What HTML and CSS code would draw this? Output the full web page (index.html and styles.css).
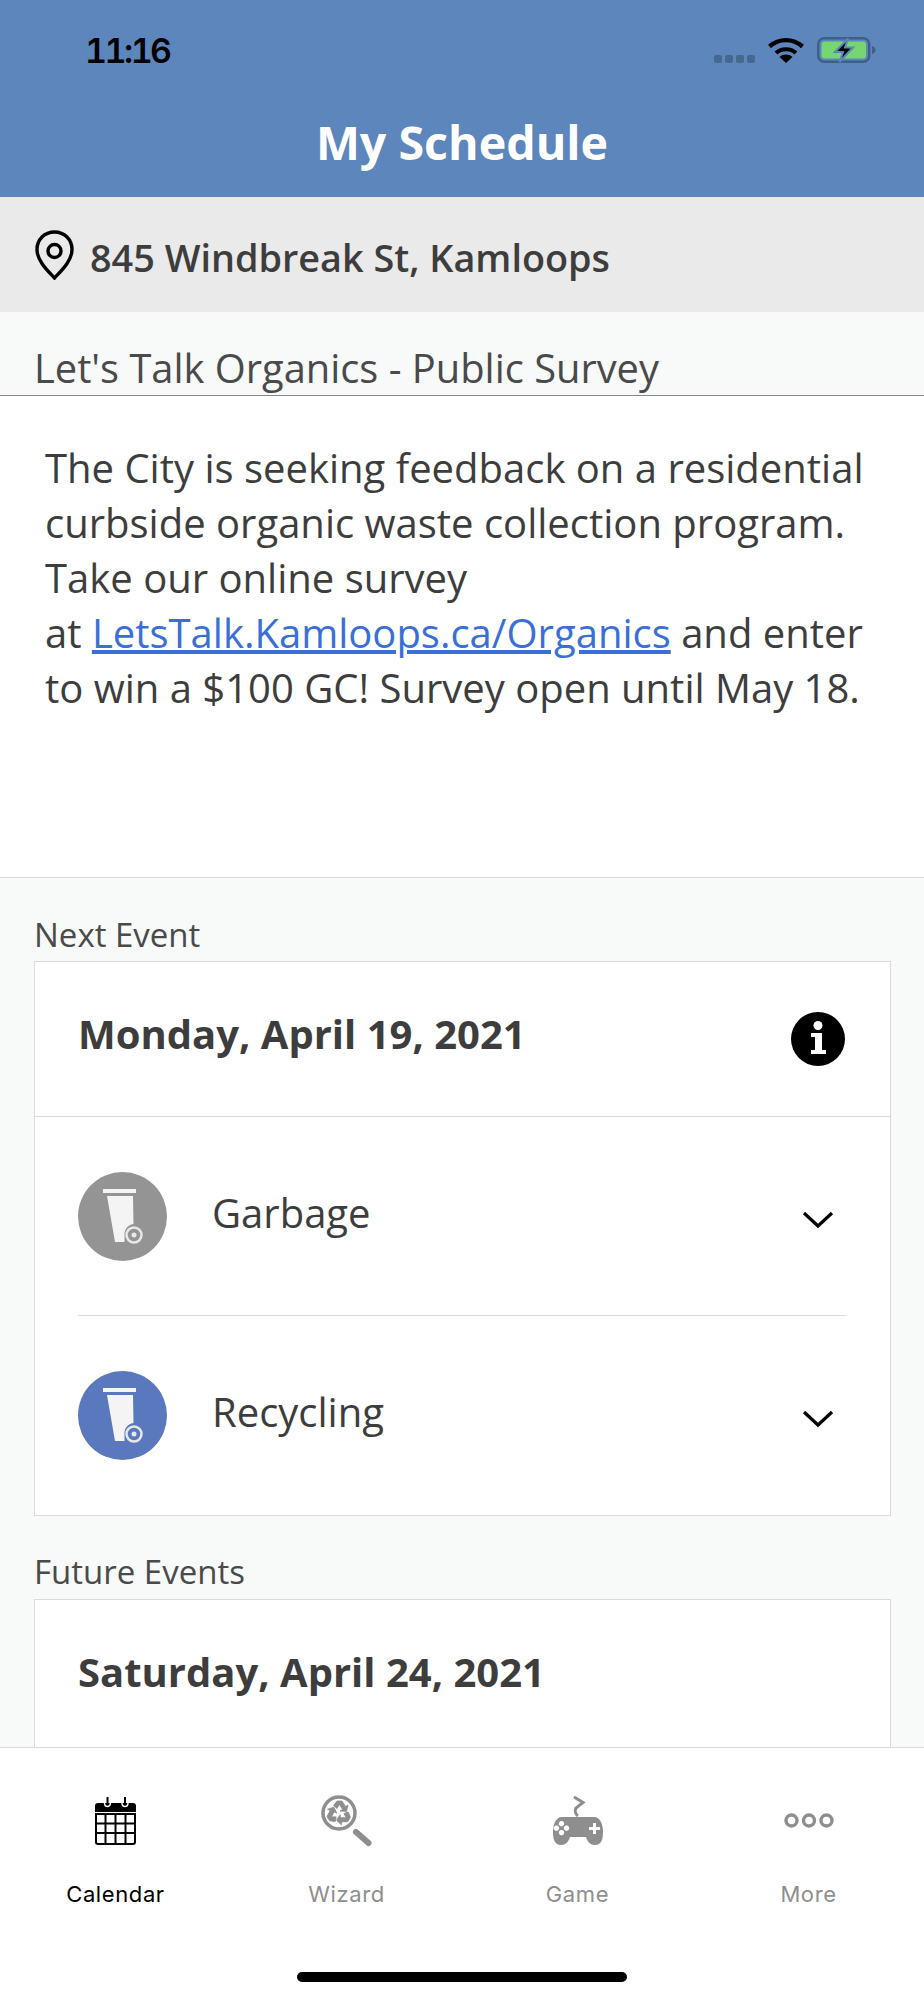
FILE: index.html
```html
<!DOCTYPE html>
<html lang="en">
<head>
  <meta charset="UTF-8" />
  <meta name="viewport" content="width=device-width, initial-scale=1.0"/>
  <title>My Schedule</title>
  <link rel="stylesheet" href="styles.css">
</head>
<body>
  <div class="app">
    <header class="top-bar">
      <div class="status-bar">
        <span class="clock">11:16</span>
        <div class="status-icons">
          <div class="signal"><i></i><i></i><i></i><i></i></div>
          <svg class="wifi" width="36" height="26" viewBox="0 0 36 26">
            <path d="M1.5 9.5C11 1 25 1 34.5 9.5" fill="none" stroke="#000" stroke-width="4.4"/>
            <path d="M8 16C13.500 11 22.500 11 28 16" fill="none" stroke="#000" stroke-width="4.2"/>
            <path d="M11.500 20L18 26L24.500 20C20.500 16.800 15.500 16.800 11.500 20Z" fill="#000"/>
          </svg>
          <svg class="battery" width="59" height="26" viewBox="0 0 59 26">
            <rect x="1.200" y="1.200" width="51" height="23.600" rx="6" fill="none" stroke="#3f5f86" stroke-width="2.400"/>
            <rect x="4.500" y="4.500" width="44.500" height="17" rx="3" fill="#76d672"/>
            <path d="M55 9c2.500 1 3.500 2.500 3.500 4s-1 3-3.500 4Z" fill="#3f5f86"/>
            <path d="M31 1.500L18 15H26L22.500 25L36 10.500H28Z" fill="#000" stroke="#5d86bc" stroke-width="2"/>
          </svg>
        </div>
      </div>
      <h1>My Schedule</h1>
    </header>

    <div class="address-bar">
      <svg class="pin" width="39" height="50" viewBox="0 0 39 50">
        <path d="M19.500 2C9.500 2 2 9.500 2 19.500C2 31 13 41 19.500 48C26 41 37 31 37 19.500C37 9.500 29.500 2 19.500 2Z" fill="none" stroke="#000" stroke-width="3.400"/>
        <circle cx="19.500" cy="21" r="6.500" fill="none" stroke="#000" stroke-width="3.400"/>
      </svg>
      <span>845 Windbreak St, Kamloops</span>
    </div>

    <main class="content">
      <section class="notice">
        <h2>Let's Talk Organics - Public Survey</h2>
        <p>
          The City is seeking feedback on a residential curbside organic waste collection program. Take our online survey<br>
          at <a href="#">LetsTalk.Kamloops.ca/Organics</a> and enter to win a $100 GC! Survey open until May 18.
        </p>
      </section>

      <section class="events">
        <h3>Next Event</h3>
        <div class="card">
          <div class="card-head">
            <span class="card-date">Monday, April 19, 2021</span>
            <svg width="54" height="54" viewBox="0 0 54 54">
              <circle cx="27" cy="27" r="27" fill="#000"/>
              <circle cx="27" cy="13.500" r="4.500" fill="#fff"/>
              <path d="M20 21H31V38H35V42H20V38H24V25H20Z" fill="#fff"/>
            </svg>
          </div>
          <div class="pickup">
            <svg class="bin" width="89" height="89" viewBox="0 0 89 89">
              <circle cx="44.500" cy="44.500" r="44.500" fill="#949494"/>
              <rect x="25" y="17" width="33" height="4" fill="#f4f4f4"/>
              <path d="M29 24H55L55.500 52C49 53 46 58 46.500 64V70H37Z" fill="#f4f4f4"/>
              <circle cx="56" cy="63" r="7.500" fill="none" stroke="#e8e8e8" stroke-width="2.500"/>
              <circle cx="56" cy="63" r="2.500" fill="#e8e8e8"/>
            </svg>
            <span class="pickup-name">Garbage</span>
            <svg class="chevron" width="32" height="18" viewBox="0 0 32 18">
              <path d="M2 2L16 15L30 2" fill="none" stroke="#000" stroke-width="3.200"/>
            </svg>
          </div>
          <div class="pickup">
            <svg class="bin" width="89" height="89" viewBox="0 0 89 89">
              <circle cx="44.500" cy="44.500" r="44.500" fill="#5a78bd"/>
              <rect x="25" y="17" width="33" height="4" fill="#f4f4f4"/>
              <path d="M29 24H55L55.500 52C49 53 46 58 46.500 64V70H37Z" fill="#f4f4f4"/>
              <circle cx="56" cy="63" r="7.500" fill="none" stroke="#e8e8e8" stroke-width="2.500"/>
              <circle cx="56" cy="63" r="2.500" fill="#e8e8e8"/>
            </svg>
            <span class="pickup-name">Recycling</span>
            <svg class="chevron" width="32" height="18" viewBox="0 0 32 18">
              <path d="M2 2L16 15L30 2" fill="none" stroke="#000" stroke-width="3.200"/>
            </svg>
          </div>
        </div>

        <h3 class="future">Future Events</h3>
        <div class="card">
          <div class="card-head">
            <span class="card-date">Saturday, April 24, 2021</span>
          </div>
        </div>
      </section>
    </main>

    <nav class="tabs">
      <div class="tab active">
        <svg width="42" height="48" viewBox="0 0 42 48">
          <path d="M3 6H38A3 3 0 0 1 41 9V15H0V9A3 3 0 0 1 3 6Z" fill="#000"/>
          <path d="M12.500 0V9M30 0V9" stroke="#000" stroke-width="2"/>
          <path d="M9.500 6A3 3.500 0 0 0 15.500 6M27 6A3 3.500 0 0 0 33 6" fill="none" stroke="#fff" stroke-width="1.400"/>
          <path d="M1 16V45A2 2 0 0 0 3 47H38A2 2 0 0 0 40 45V16M1 17H40M1 26.500H40M1 36H40M10.500 16V47M20.500 16V47M30.500 16V47" fill="none" stroke="#000" stroke-width="2"/>
        </svg>
        <span>Calendar</span>
      </div>
      <div class="tab">
        <svg width="52" height="52" viewBox="0 0 52 52">
          <circle cx="18" cy="18" r="16" fill="none" stroke="#8e8e8e" stroke-width="3.500"/>
          <path d="M35 37L47.500 48" stroke="#8e8e8e" stroke-width="6" stroke-linecap="round"/>
          <g fill="#8e8e8e" stroke="#8e8e8e" stroke-width="0.800">
            <path id="chase" d="M12.500 10.500L16 6H21L24.500 11.500L27 10L25.500 16.500L19 16L21.500 14.500L18.500 9.500L16 13.500Z"/>
            <use href="#chase" transform="rotate(120 18 18)"/>
            <use href="#chase" transform="rotate(240 18 18)"/>
          </g>
        </svg>
        <span>Wizard</span>
      </div>
      <div class="tab">
        <svg width="52" height="50" viewBox="0 0 52 50">
          <path d="M22 1L31 6.500L24 12C22.500 14 23 18 26 20" fill="none" stroke="#8e8e8e" stroke-width="3"/>
          <path fill-rule="evenodd" fill="#8e8e8e" d="M10 21H42C48 21 51 28 51 36C51 44 49 49 43 49C37 49 35 44 34 41H18C17 44 15 49 9 49C3 49 1 44 1 36C1 28 4 21 10 21ZM37 31H41V27H44V31H48V34H44V38H41V34H37ZM9.500 25A2.700 2.700 0 1 0 9.501 25ZM4.500 29.500A2.700 2.700 0 1 0 4.501 29.500ZM14.500 29.500A2.700 2.700 0 1 0 14.501 29.500ZM9.500 34A2.700 2.700 0 1 0 9.501 34Z"/>
        </svg>
        <span>Game</span>
      </div>
      <div class="tab">
        <svg class="more-icon" width="50" height="50" viewBox="0 0 50 50">
          <g fill="none" stroke="#8e8e8e" stroke-width="3.400">
            <circle cx="7.500" cy="24.500" r="5.500"/>
            <circle cx="25" cy="24.500" r="5.500"/>
            <circle cx="42.500" cy="24.500" r="5.500"/>
          </g>
        </svg>
        <span>More</span>
      </div>
      <div class="home-bar"></div>
    </nav>
  </div>
</body>
</html>
```

FILE: styles.css
```css
:root {
  --header-blue: #5d86bc;
  --text-color: #3d3d3d;
  --line-color: #d9dbdb;
  --page-bg: #f8f9f9;
}

body {
  margin: 0;
  font-family: 'Open Sans', sans-serif;
  color: var(--text-color);
  background-color: var(--page-bg);
}

.app {
  height: 2000px;
  display: flex;
  flex-direction: column;
  overflow: hidden;
}

.top-bar {
  height: 197px;
  flex-shrink: 0;
  box-sizing: border-box;
  background-color: var(--header-blue);
  padding-top: 37px;
}

.status-bar {
  height: 26px;
  display: flex;
  justify-content: space-between;
  align-items: center;
  padding: 0 48px 0 85px;
}

.clock {
  font-family: Inter, sans-serif;
  font-size: 34px;
  font-weight: 600;
  font-variant-numeric: tabular-nums;
  letter-spacing: -2.5px;
  color: #000;
}

.status-icons {
  display: flex;
  align-items: flex-end;
}

.signal {
  display: flex;
  gap: 3px;
  margin-right: 13px;
}

.signal i {
  width: 8px;
  height: 8px;
  border-radius: 2px;
  background-color: #45688f;
}

.wifi {
  margin-right: 13px;
}

.top-bar h1 {
  margin: 48px 0 0;
  font-size: 46.6px;
  line-height: 62px;
  font-weight: 700;
  text-align: center;
  color: #fff;
}

.address-bar {
  height: 115px;
  flex-shrink: 0;
  display: flex;
  align-items: center;
  padding-left: 35px;
  font-size: 37.8px;
  font-weight: 600;
  background-color: #eaeaea;
}

.address-bar span {
  margin-top: 6px;
}

.pin {
  margin-right: 16px;
}

.content {
  flex: 1;
  overflow: hidden;
}

.notice {
  height: 566px;
  box-sizing: border-box;
  background-color: #fff;
  border-bottom: 1px solid var(--line-color);
}

.notice h2 {
  margin: 0;
  height: 84px;
  box-sizing: border-box;
  padding: 17px 34px 0;
  font-size: 39.85px;
  line-height: 78px;
  font-weight: 400;
  color: #4a4a4a;
  background-color: var(--page-bg);
  border-bottom: 1px solid #888;
  overflow: hidden;
}

.notice p {
  margin: 0;
  padding: 44px 45px 0;
  font-size: 40px;
  line-height: 55px;
}

.notice a {
  color: #3b6fd8;
}

.events {
  padding: 0 33px 0 34px;
}

.events h3 {
  margin: 0;
  padding-top: 32px;
  font-size: 33px;
  line-height: 50px;
  font-weight: 400;
  color: #4a4a4a;
}

.events h3.future {
  padding-top: 31px;
}

.card {
  background-color: #fff;
  border: 1px solid var(--line-color);
  padding: 0 44px 0 43px;
  margin-top: 1px;
}

.future + .card {
  margin-top: 2px;
}

.card-head {
  height: 154px;
  margin: 0 -44px 0 -43px;
  padding: 0 45px 0 43px;
  display: flex;
  justify-content: space-between;
  align-items: center;
  font-size: 40px;
  font-weight: 700;
  border-bottom: 1px solid var(--line-color);
}

.card-date {
  margin-bottom: 12px;
}

.pickup {
  height: 198px;
  display: flex;
  align-items: center;
  border-bottom: 1px solid var(--line-color);
}

.pickup:last-child {
  height: 199px;
  padding-bottom: 1px;
  box-sizing: border-box;
  border-bottom: none;
}

.bin {
  margin-right: 45px;
}

.pickup-name {
  flex: 1;
  font-size: 40px;
  margin-top: -8px;
}

.chevron {
  margin: 8px 12px 0 0;
}

.tabs {
  position: relative;
  height: 253px;
  flex-shrink: 0;
  box-sizing: border-box;
  display: grid;
  grid-template-columns: repeat(4, 1fr);
  background-color: #fff;
  border-top: 1px solid var(--line-color);
}

.tab {
  display: flex;
  flex-direction: column;
  align-items: center;
  padding-top: 47px;
  color: #8e8e8e;
  font-family: Inter, sans-serif;
  font-size: 22px;
  letter-spacing: 0.6px;
}

.tab svg {
  height: 52px;
  margin-bottom: 34px;
}

.tab.active {
  color: #000;
}

.home-bar {
  position: absolute;
  left: 297px;
  bottom: 18px;
  width: 330px;
  height: 10px;
  border-radius: 5px;
  background-color: #000;
}
```
